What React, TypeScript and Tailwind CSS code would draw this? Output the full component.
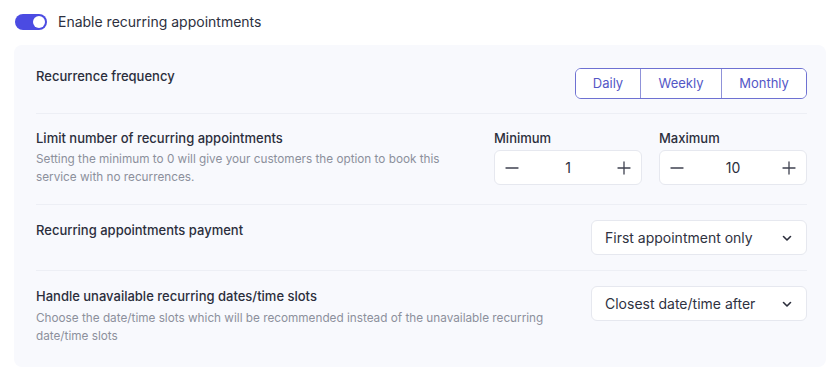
import React, { useState } from 'react';

const font = { fontFamily: 'Inter, "Noto Sans", sans-serif' };

function Minus() {
  return (
    <svg width="14" height="14" viewBox="0 0 14 14" fill="none">
      <path d="M1 7h12" stroke="#3f4250" strokeWidth="1.3" strokeLinecap="round" />
    </svg>
  );
}

function Plus() {
  return (
    <svg width="14" height="14" viewBox="0 0 14 14" fill="none">
      <path d="M1 7h12M7 1v12" stroke="#3f4250" strokeWidth="1.3" strokeLinecap="round" />
    </svg>
  );
}

function Chevron() {
  return (
    <svg width="12" height="12" viewBox="0 0 12 12" fill="none">
      <path d="M2.5 4.5L6 8l3.5-3.5" stroke="#2b2e3c" strokeWidth="1.6" strokeLinecap="round" strokeLinejoin="round" />
    </svg>
  );
}

function Stepper({ label, value }: { label: string; value: number }) {
  return (
    <div className="flex flex-col">
      <span className="text-[13px] leading-4 font-medium text-[#2b2e3c]">{label}</span>
      <div className="mt-1 flex h-[35px] w-[148px] items-center justify-between rounded-md border border-[#e6e8ef] bg-white px-[10px]">
        <Minus />
        <span className="text-[14px] text-[#2b2e3c]">{value}</span>
        <Plus />
      </div>
    </div>
  );
}

function Select({ value }: { value: string }) {
  return (
    <div className="flex h-[35px] w-[216px] shrink-0 items-center justify-between rounded-md border border-[#e6e8ef] bg-white pl-[13px] pr-[13px]">
      <span className="text-[14px] text-[#2f3241]">{value}</span>
      <Chevron />
    </div>
  );
}

export default function App() {
  const [enabled, setEnabled] = useState(true);
  const [freq, setFreq] = useState('Weekly');

  return (
    <main className="min-h-screen bg-white" style={font}>
      <div className="px-[14px] pt-[11px]">
        <div className="flex items-center gap-[11px] pl-[1px]">
          <button
            onClick={() => setEnabled(!enabled)}
            className="flex h-4 w-8 items-center rounded-full bg-[#4b4be2] p-[2px]"
          >
            <span className={`h-3 w-3 rounded-full bg-white ${enabled ? 'ml-auto' : ''}`} />
          </button>
          <span className="text-[14px] text-[#2d3040]">Enable recurring appointments</span>
        </div>

        <div className="mt-[13px] w-[812px] rounded-lg bg-[#f8f9fd] pl-[22px] pr-[19px]">
          <div className="flex items-start justify-between border-b border-[#edeff5] pt-[23px] pb-[14px]">
            <span className="text-[13px] leading-4 font-medium text-[#2b2e3c]">Recurrence frequency</span>
            <div className="flex h-[31px] overflow-hidden rounded-md border border-[#6e71d2]">
              {['Daily', 'Weekly', 'Monthly'].map((f, i) => (
                <button
                  key={f}
                  onClick={() => setFreq(f)}
                  className={`flex items-center justify-center bg-white text-[13px] text-[#5457c6] ${
                    i > 0 ? 'border-l border-[#8f92d9]' : ''
                  } ${i === 0 ? 'w-[64px]' : i === 1 ? 'w-[81px]' : 'w-[85px]'}`}
                >
                  {f}
                </button>
              ))}
            </div>
          </div>

          <div className="flex items-start gap-8 border-b border-[#edeff5] pt-[16px] pb-[18px]">
            <div className="min-w-0 flex-1">
              <div className="text-[13px] leading-4 font-medium text-[#2b2e3c]">Limit number of recurring appointments</div>
              <p className="mt-1 max-w-[420px] text-[11.75px] leading-[18px] text-[#8c909c]">
                Setting the minimum to 0 will give your customers the option to book this service with no recurrences.
              </p>
            </div>
            <div className="flex gap-[17px]">
              <Stepper label="Minimum" value={1} />
              <Stepper label="Maximum" value={10} />
            </div>
          </div>

          <div className="flex items-start gap-8 border-b border-[#edeff5] pt-[15px] pb-[15px]">
            <div className="min-w-0 flex-1 pt-[2px]">
              <div className="text-[13px] leading-4 font-medium text-[#2b2e3c]">Recurring appointments payment</div>
            </div>
            <Select value="First appointment only" />
          </div>

          <div className="flex items-start gap-8 pt-[15px] pb-[22px]">
            <div className="min-w-0 flex-1 pt-[2px]">
              <div className="text-[13px] leading-4 font-medium text-[#2b2e3c]">Handle unavailable recurring dates/time slots</div>
              <p className="mt-[5px] text-[11.75px] leading-[18px] text-[#8c909c]">
                Choose the date/time slots which will be recommended instead of the unavailable recurring date/time slots
              </p>
            </div>
            <Select value="Closest date/time after" />
          </div>
        </div>
      </div>
    </main>
  );
}
